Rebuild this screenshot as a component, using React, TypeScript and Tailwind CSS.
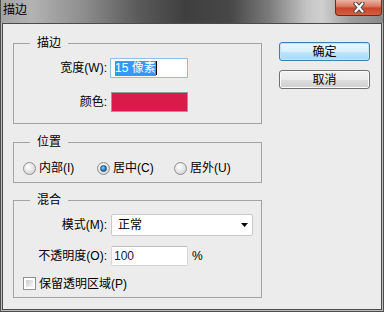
import React from "react";

function Radio({ checked }: { checked?: boolean }) {
  return (
    <span className="w-[13px] h-[13px] shrink-0 rounded-full border border-[#8e8f8f] bg-[radial-gradient(circle_at_40%_35%,#ffffff_0%,#e8e8e8_45%,#c9c9c9_100%)] flex items-center justify-center">
      {checked && (
        <span className="w-[7px] h-[7px] rounded-full border border-[#1b4f7a] bg-[radial-gradient(circle_at_40%_35%,#8fd3f5_0%,#2a86c4_50%,#0d4f86_100%)]" />
      )}
    </span>
  );
}

export default function App() {
  return (
    <div className="w-[384px] h-[312px] flex flex-col bg-[#bdbdbd] border-x border-b border-[#4d4d4d] overflow-hidden font-['Liberation_Sans','Noto_Sans_CJK_SC',sans-serif] text-[12px] text-black">
      {/* title bar */}
      <div className="h-[23px] shrink-0 flex items-start justify-between bg-[linear-gradient(90deg,#a3a3a3_0%,#b3b3b3_8%,#8c8c8c_22%,#5a5a5a_36%,#3f3f3f_48%,#474747_60%,#7a7a7a_70%,#c4c4c4_80%,#cfcfcf_84%,#9c9c9c_92%,#8a8a8a_100%)]">
        <span className="pl-[2px] pt-[3px] leading-[14px]">描边</span>
        <div className="mr-[1px] w-[47px] h-[16px] rounded-b-[4px] border border-t-0 border-[#6b2a1e] bg-[linear-gradient(180deg,#ebb3a4_0%,#dc7b62_40%,#c8452b_55%,#d4603f_100%)] flex items-center justify-center">
          <svg width="14" height="11" viewBox="0 0 14 11">
            <path d="M3.5 1.5 L10.5 9.5 M10.5 1.5 L3.5 9.5" stroke="#4a4a4a" strokeWidth="4.2" strokeLinecap="round" fill="none" />
            <path d="M3.5 1.5 L10.5 9.5 M10.5 1.5 L3.5 9.5" stroke="#ffffff" strokeWidth="2.2" strokeLinecap="round" fill="none" />
          </svg>
        </div>
      </div>

      {/* client */}
      <div className="flex-1 mx-[1px] mb-[1px] border border-[#4a4a4a] bg-[#ececec] flex">
        <div className="ml-[10px] w-[249px] flex flex-col">
          {/* 描边 */}
          <fieldset className="mt-[12px] border border-[#a3a3a3] px-0 pb-[11px]">
            <legend className="ml-[16px] px-[7px] leading-[14px]">描边</legend>
            <div className="pt-[8px] flex flex-col gap-[14px]">
              <div className="flex items-center h-[20px]">
                <span className="w-[93px] text-right">宽度(W):</span>
                <div className="ml-[3px] w-[78px] h-[20px] border border-[#94bde3] bg-white flex items-center pl-[4px]">
                  <span className="bg-[#3399ff] text-white leading-[15px]">15 像素</span>
                  <span className="w-px h-[14px] bg-black" />
                </div>
              </div>
              <div className="flex items-center h-[20px]">
                <span className="w-[93px] text-right">颜色:</span>
                <div className="ml-[4px] w-[77px] h-[20px] border border-[#9a9a9a] bg-[#d91b4b]" />
              </div>
            </div>
          </fieldset>

          {/* 位置 */}
          <fieldset className="mt-[11px] border border-[#a3a3a3] px-0 pb-[7px]">
            <legend className="ml-[16px] px-[7px] leading-[14px]">位置</legend>
            <div className="pt-[12px] pl-[9px] flex items-center h-[26px]">
              <label className="w-[74px] flex items-center h-[14px]">
                <Radio />
                <span className="ml-[3px] leading-[14px]">内部(I)</span>
              </label>
              <label className="w-[77px] flex items-center h-[14px]">
                <Radio checked />
                <span className="ml-[3px] leading-[14px]">居中(C)</span>
              </label>
              <label className="flex items-center h-[14px]">
                <Radio />
                <span className="ml-[3px] leading-[14px]">居外(U)</span>
              </label>
            </div>
          </fieldset>

          {/* 混合 */}
          <fieldset className="mt-[10px] border border-[#a3a3a3] px-0 pb-[7px]">
            <legend className="ml-[16px] px-[7px] leading-[14px]">混合</legend>
            <div className="pt-[7px] flex flex-col">
              <div className="flex items-center h-[22px]">
                <span className="w-[93px] text-right">模式(M):</span>
                <div className="ml-[4px] w-[142px] h-[22px] border border-[#cacaca] rounded-[2px] bg-white flex items-center justify-between pl-[6px] pr-[4px]">
                  <span>正常</span>
                  <svg width="7" height="4" viewBox="0 0 7 4">
                    <path d="M0 0 H7 L3.5 4 Z" fill="#000" />
                  </svg>
                </div>
              </div>
              <div className="mt-[10px] flex items-center h-[20px]">
                <span className="w-[93px] text-right">不透明度(O):</span>
                <div className="ml-[4px] w-[77px] h-[20px] border border-[#d6d6d6] border-t-[#bdbdbd] rounded-[2px] bg-white flex items-center pl-[2px]">
                  <span className="text-[#1a1a3a]">100</span>
                </div>
                <span className="ml-[4px]">%</span>
              </div>
              <div className="mt-[11px] pl-[9px] flex items-center h-[13px]">
                <span className="w-[13px] h-[13px] shrink-0 border border-[#8e8f8f] bg-white p-[2px]">
                  <span className="block w-full h-full bg-[linear-gradient(135deg,#cbcbcb_0%,#e6e6e6_60%,#f7f7f7_100%)]" />
                </span>
                <span className="ml-[3px] leading-[14px]">保留透明区域(P)</span>
              </div>
            </div>
          </fieldset>
        </div>

        {/* buttons */}
        <div className="ml-[17px] mt-[18px] flex flex-col">
          <button className="w-[91px] h-[19px] rounded-[3px] border border-[#3c7fb1] bg-[linear-gradient(180deg,#eaf6fd_0%,#d9f0fc_50%,#bee6fd_50%,#a7d9f5_100%)] shadow-[inset_0_0_0_1px_#c2e6f8] flex items-center justify-center leading-none">
            确定
          </button>
          <button className="mt-[9px] w-[91px] h-[19px] rounded-[3px] border border-[#707070] bg-[linear-gradient(180deg,#f2f2f2_0%,#ebebeb_50%,#dddddd_50%,#cfcfcf_100%)] shadow-[inset_0_0_0_1px_#fcfcfc] flex items-center justify-center leading-none">
            取消
          </button>
        </div>
      </div>
    </div>
  );
}
